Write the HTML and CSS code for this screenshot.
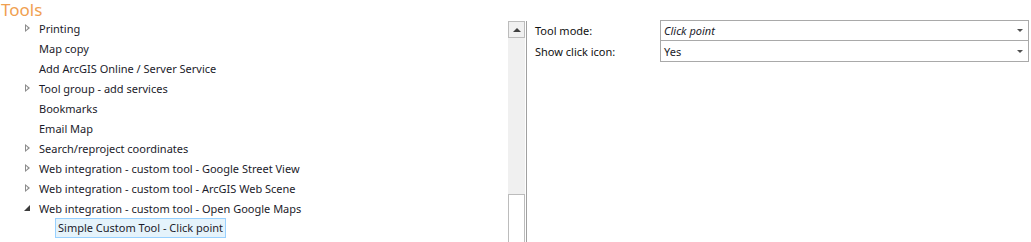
FILE: index.html
```html
<!DOCTYPE html>
<html>
<head>
<meta charset="utf-8">
<link rel="stylesheet" href="styles.css">
</head>
<body>
<div class="title">Tools</div>
<div class="main">
  <div class="tree">
    <div class="row"><span class="tog closed"></span><span class="label">Printing</span></div>
    <div class="row"><span class="tog"></span><span class="label">Map copy</span></div>
    <div class="row"><span class="tog"></span><span class="label">Add ArcGIS Online / Server Service</span></div>
    <div class="row"><span class="tog closed"></span><span class="label">Tool group - add services</span></div>
    <div class="row"><span class="tog"></span><span class="label">Bookmarks</span></div>
    <div class="row"><span class="tog"></span><span class="label">Email Map</span></div>
    <div class="row"><span class="tog closed"></span><span class="label">Search/reproject coordinates</span></div>
    <div class="row"><span class="tog closed"></span><span class="label">Web integration - custom tool - Google Street View</span></div>
    <div class="row"><span class="tog closed"></span><span class="label">Web integration - custom tool - ArcGIS Web Scene</span></div>
    <div class="row"><span class="tog open"></span><span class="label">Web integration - custom tool - Open Google Maps</span></div>
    <div class="row child"><span class="label selected">Simple Custom Tool - Click point</span></div>
  </div>
  <div class="scrollbar">
    <div class="sb-up"><span class="sb-arrow"></span></div>
    <div class="sb-track"></div>
    <div class="sb-thumb"></div>
  </div>
  <div class="divider"></div>
  <div class="props">
    <div class="prop-label">Tool mode:</div>
    <div class="prop-value first"><span class="italic">Click point</span><span class="dd"></span></div>
    <div class="prop-label">Show click icon:</div>
    <div class="prop-value"><span>Yes</span><span class="dd"></span></div>
  </div>
</div>
</body>
</html>
```
FILE: styles.css
```css
html, body {
  margin: 0;
  padding: 0;
  background: #ffffff;
}
body {
  width: 1031px;
  height: 242px;
  overflow: hidden;
  font-family: "Noto Sans", "Open Sans", sans-serif;
  font-size: 11px;
  color: #1b1b2a;
}
.title {
  height: 18px;
  line-height: 20px;
  padding-left: 1px;
  font-size: 17px;
  color: #f0a050;
}
.main {
  display: flex;
  height: 224px;
}
.tree {
  width: 508px;
  flex: none;
}
.row {
  height: 20px;
  display: flex;
  align-items: center;
  padding-left: 24px;
  white-space: nowrap;
}
.tog {
  width: 15px;
  height: 20px;
  flex: none;
  position: relative;
}
.tog.closed::before {
  content: "";
  position: absolute;
  left: 1px;
  top: 6px;
  width: 0;
  height: 0;
  border-top: 4px solid transparent;
  border-bottom: 4px solid transparent;
  border-left: 5px solid #8c8c8c;
}
.tog.closed::after {
  content: "";
  position: absolute;
  left: 2px;
  top: 8px;
  width: 0;
  height: 0;
  border-top: 2px solid transparent;
  border-bottom: 2px solid transparent;
  border-left: 2.5px solid #ffffff;
}
.tog.open::before {
  content: "";
  position: absolute;
  left: 0px;
  top: 7px;
  width: 0;
  height: 0;
  border-left: 6px solid transparent;
  border-bottom: 6px solid #3c3c3c;
}
.row.child {
  padding-left: 55px;
}
.label.selected {
  background: #e5f3fb;
  border: 1px solid #99d1ff;
  padding: 1px 2px 2px 2px;
  line-height: 15px;
}
.scrollbar {
  width: 17px;
  margin-top: 3px;
  display: flex;
  flex-direction: column;
  background: #f0f0f0;
  flex: none;
}
.sb-up {
  height: 15px;
  border: 1px solid #bcbcbc;
  display: flex;
  align-items: center;
  justify-content: center;
}
.sb-arrow {
  width: 0;
  height: 0;
  border-left: 4px solid transparent;
  border-right: 4px solid transparent;
  border-bottom: 4px solid #404040;
}
.sb-track {
  flex: 1;
}
.sb-thumb {
  height: 47px;
  background: #ffffff;
  border: 1px solid #bcbcbc;
  border-bottom: none;
}
.divider {
  width: 1px;
  margin-left: 1px;
  margin-top: 3px;
  background: #a0a0a0;
  flex: none;
}
.props {
  display: grid;
  grid-template-columns: 125px 369px;
  grid-auto-rows: 21px;
  padding-left: 8px;
  margin-top: 2px;
  align-content: start;
}
.prop-label {
  display: flex;
  align-items: center;
  color: #111111;
}
.prop-value {
  border: 1px solid #a9a9a9;
  border-top: none;
  display: flex;
  align-items: center;
  justify-content: space-between;
  padding: 0 5px 0 3px;
}
.prop-value.first {
  border-top: 1px solid #a9a9a9;
}
.italic {
  font-style: italic;
}
.dd {
  width: 0;
  height: 0;
  border-left: 3px solid transparent;
  border-right: 3px solid transparent;
  border-top: 3px solid #505050;
}
```
